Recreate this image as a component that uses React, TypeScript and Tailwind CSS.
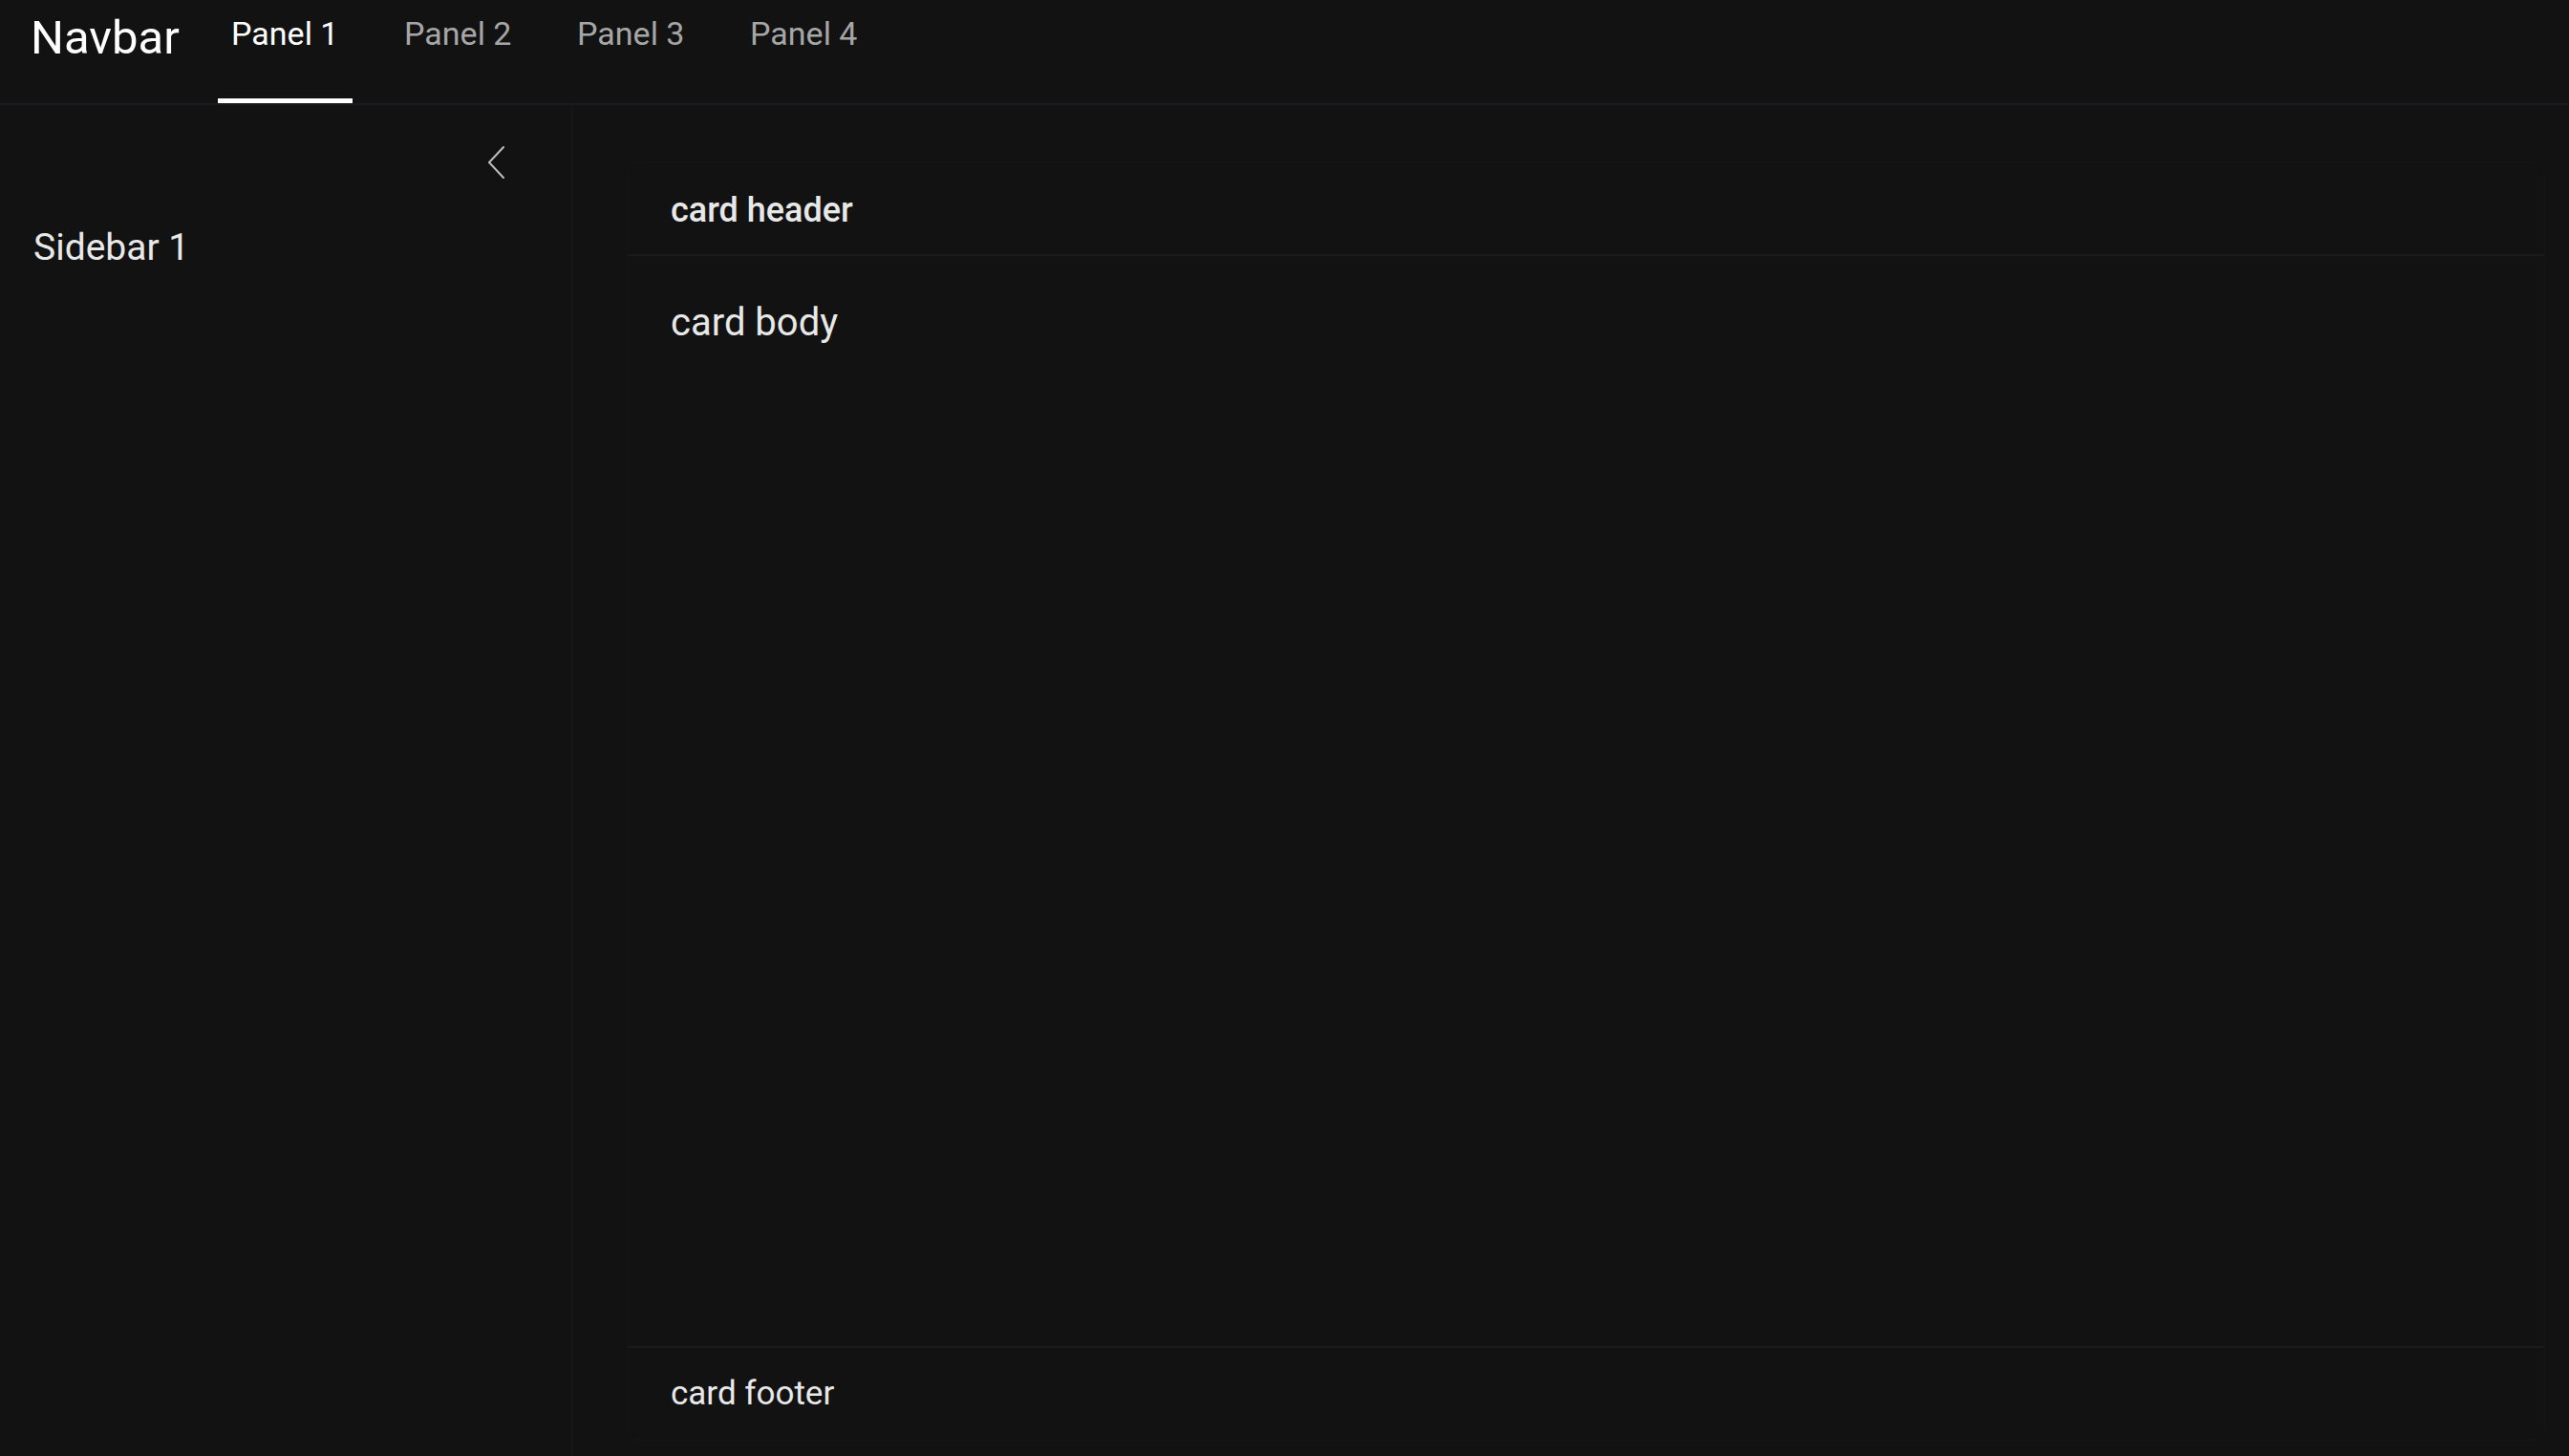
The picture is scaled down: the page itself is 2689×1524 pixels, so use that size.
import React from "react";

export default function App() {
  const tabs = ["Panel 1", "Panel 2", "Panel 3", "Panel 4"];
  return (
    <div className="h-[1524px] w-full bg-[#121212] flex flex-col font-['Roboto',sans-serif] overflow-hidden">
      <nav className="h-[110px] shrink-0 border-b-2 border-[#1a1a1f] flex items-start gap-[40px] pl-[32px]">
        <div className="text-[49px] leading-none text-white pt-[15px]">Navbar</div>
        {tabs.map((t, i) => (
          <div
            key={t}
            className={
              i === 0
                ? "w-[141px] h-[108px] flex justify-center border-b-[5px] border-white"
                : "w-[141px] h-[108px] flex justify-center border-b-[5px] border-transparent"
            }
          >
            <span
              className={
                i === 0
                  ? "text-[34px] leading-none pt-[18px] text-white"
                  : "text-[34px] leading-none pt-[18px] text-[#a6a6a6]"
              }
            >
              {t}
            </span>
          </div>
        ))}
      </nav>
      <div className="flex flex-1 min-h-0">
        <aside className="w-[600px] shrink-0 border-r-2 border-[#17171b] flex flex-col">
          <div className="flex justify-end pr-[70px] pt-[43px]">
            <svg width="18" height="34" viewBox="0 0 18 34" fill="none">
              <path d="M17 1 L2 17 L17 33" stroke="#bdbdbd" strokeWidth="2" strokeLinecap="round" strokeLinejoin="round" />
            </svg>
          </div>
          <div className="pl-[35px] mt-[53px] text-[39px] leading-none text-[#e8e8e8]">Sidebar 1</div>
        </aside>
        <main className="flex-1 pl-[56px] pr-[25px] pt-[60px] pb-[16px] flex">
          <div className="flex-1 flex flex-col border border-[#151515] rounded-[12px]">
            <div className="h-[97px] shrink-0 border-b-2 border-[#1b1b1b] pl-[45px] pt-[31px] text-[36px] leading-none font-medium text-[#e8e8e8]">
              card header
            </div>
            <div className="flex-1 pl-[45px] pt-[50px] text-[40px] leading-none text-[#e8e8e8]">card body</div>
            <div className="h-[98px] shrink-0 border-t-2 border-[#1b1b1b] pl-[45px] pt-[30px] text-[35px] leading-none text-[#e8e8e8]">
              card footer
            </div>
          </div>
        </main>
      </div>
    </div>
  );
}
